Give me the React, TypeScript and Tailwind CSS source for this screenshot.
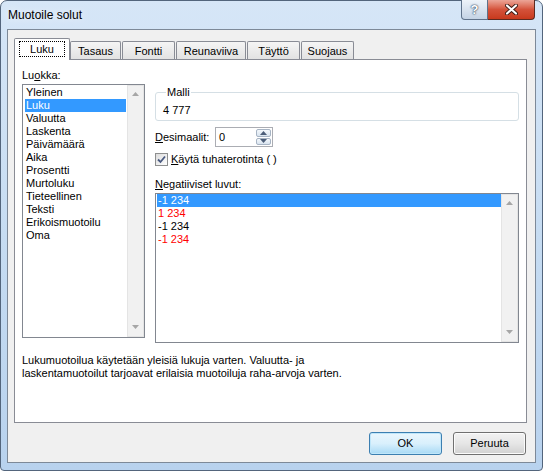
import React from "react";

const categories = [
  "Yleinen",
  "Luku",
  "Valuutta",
  "Laskenta",
  "Päivämäärä",
  "Aika",
  "Prosentti",
  "Murtoluku",
  "Tieteellinen",
  "Teksti",
  "Erikoismuotoilu",
  "Oma",
];

const negatives = [
  { text: "-1 234", selected: true, red: false },
  { text: "1 234", selected: false, red: true },
  { text: "-1 234", selected: false, red: false },
  { text: "-1 234", selected: false, red: true },
];

const tabs = [
  { label: "Tasaus", cls: "w-[51px]" },
  { label: "Fontti", cls: "ml-px w-[53px]" },
  { label: "Reunaviiva", cls: "ml-px w-[70px]" },
  { label: "Täyttö", cls: "ml-px w-[53px]" },
  { label: "Suojaus", cls: "ml-px w-[53px]" },
];

function ScrollBar() {
  return (
    <div className="flex w-[17px] flex-none flex-col items-center justify-between border border-[#e4e4e4] bg-[#f1f1f1] pt-[6px] pb-[7px]">
      <svg width="7" height="4" viewBox="0 0 7 4">
        <path d="M0 4 L3.5 0 L7 4 Z" fill="#a6a6a6" />
      </svg>
      <svg width="7" height="4" viewBox="0 0 7 4">
        <path d="M0 0 L3.5 4 L7 0 Z" fill="#a6a6a6" />
      </svg>
    </div>
  );
}

function Spinner() {
  return (
    <div className="flex h-[20px] w-[58px] items-stretch border border-[#abadb3] bg-white">
      <span className="flex-1 pl-[3px] leading-[18px]">0</span>
      <div className="flex w-[16px] flex-col gap-px py-px pr-px">
        <div className="flex flex-1 items-center justify-center rounded-[2px] border border-[#a7b4c4] bg-gradient-to-b from-[#f4f8fc] to-[#d9e4ef]">
          <svg width="7" height="4" viewBox="0 0 7 4">
            <path d="M0 4 L3.5 0 L7 4 Z" fill="#4b5d78" />
          </svg>
        </div>
        <div className="flex flex-1 items-center justify-center rounded-[2px] border border-[#a7b4c4] bg-gradient-to-b from-[#f4f8fc] to-[#d9e4ef]">
          <svg width="7" height="4" viewBox="0 0 7 4">
            <path d="M0 0 L3.5 4 L7 0 Z" fill="#4b5d78" />
          </svg>
        </div>
      </div>
    </div>
  );
}

function CheckBox() {
  return (
    <span className="flex size-[13px] items-center justify-center border border-[#8e8f8f] bg-gradient-to-br from-[#dcdcdc] to-[#ffffff]">
      <svg width="9" height="9" viewBox="0 0 9 9">
        <path d="M1 4.5 L3.5 7 L8 1.5" fill="none" stroke="#4a5a80" strokeWidth="1.8" />
      </svg>
    </span>
  );
}

export default function App() {
  return (
    <div className="h-[471px] w-[543px] bg-white font-['Liberation_Sans',Arial,sans-serif] text-[11px] text-black">
      <div className="flex h-full w-full flex-col rounded-t-[7px] rounded-b-[4px] border border-[#53657c] bg-gradient-to-b from-[#d6e6f7] via-[#c6dcf2] to-[#b8d2ee] px-[6px] pb-[7px]">
        {/* caption */}
        <div className="flex h-[28px] items-start justify-between">
          <span className="pl-px pt-[6px] text-[12px] leading-[16px] [text-shadow:0_0_8px_#ffffff]">Muotoile solut</span>
          <div className="-mt-px mr-px flex">
            <div className="flex h-[20px] w-[27px] items-center justify-center rounded-bl-[4px] border border-t-0 border-[#5f728a] bg-gradient-to-b from-[#eef3f9] via-[#d9e3ef] to-[#c4d3e5] text-[13px] font-bold text-white [text-shadow:0_0_2px_#22344c,0_0_1px_#22344c]">
              ?
            </div>
            <div className="flex h-[20px] w-[47px] items-center justify-center rounded-br-[4px] border border-l-0 border-t-0 border-[#5c2a20] bg-gradient-to-b from-[#eba597] via-[#d4523a] to-[#c8391c]">
              <svg width="13" height="11" viewBox="0 0 13 11">
                <path d="M2 1.5 L11 9.5 M11 1.5 L2 9.5" stroke="#3b1a14" strokeWidth="4" strokeLinecap="round" />
                <path d="M2 1.5 L11 9.5 M11 1.5 L2 9.5" stroke="#ffffff" strokeWidth="2.2" strokeLinecap="round" />
              </svg>
            </div>
          </div>
        </div>

        {/* client */}
        <div className="flex flex-1 flex-col border border-[#7d8998] bg-[#f0f0f0]">
          {/* tabs */}
          <div className="relative z-10 flex items-end pl-[6px] pt-[8px]">
            <div className="-mb-px flex h-[22px] w-[56px] flex-col rounded-t-[2px] border border-b-0 border-[#898c95] bg-white px-[4px] pt-[2px]">
              <span className="flex h-[16px] items-center justify-center border border-dotted border-black leading-[14px]">Luku</span>
            </div>
            {tabs.map((t) => (
              <div
                key={t.label}
                className={`flex h-[18px] items-center justify-center rounded-t-[2px] border border-b-0 border-[#898c95] bg-gradient-to-b from-[#f5f5f5] to-[#e2e2e2] pt-px ${t.cls}`}
              >
                {t.label}
              </div>
            ))}
          </div>

          {/* panel */}
          <div className="ml-[6px] mr-[8px] flex h-[364px] flex-col border border-[#898c95] bg-white pl-[7px] pr-[7px] pt-[8px]">
            <div className="flex gap-[10px]">
              {/* left column */}
              <div className="flex flex-col">
                <span className="leading-[15px]">
                  Lu<span className="underline">o</span>kka:
                </span>
                <div className="mt-px flex h-[254px] w-[123px] border border-[#828790] bg-white">
                  <div className="flex flex-1 flex-col pl-[2px] pt-px">
                    {categories.map((c) => (
                      <div
                        key={c}
                        className={`h-[13px] w-[101px] pl-px leading-[13px] ${c === "Luku" ? "bg-[#3399ff] text-white" : ""}`}
                      >
                        {c}
                      </div>
                    ))}
                  </div>
                  <ScrollBar />
                </div>
              </div>

              {/* right column */}
              <div className="flex flex-1 flex-col">
                <fieldset className="mt-[17px] h-[36px] rounded-[3px] border border-[#d5dfe5] pl-[7px]">
                  <legend className="ml-[3px] px-px leading-[14px]">Malli</legend>
                  <div className="pt-[4px] leading-[14px]">4 777</div>
                </fieldset>

                <div className="mt-[6px] flex items-center gap-[8px]">
                  <span className="w-[52px]">
                    <span className="underline">D</span>esimaalit:
                  </span>
                  <Spinner />
                </div>

                <div className="mt-[6px] flex items-center gap-[3px]">
                  <CheckBox />
                  <span className="leading-[13px]">
                    <span className="underline">K</span>äytä tuhaterotinta ( )
                  </span>
                </div>

                <span className="mt-[11px] leading-[14px]">
                  <span className="underline">N</span>egatiiviset luvut:
                </span>

                <div className="mt-[2px] flex h-[150px] border border-[#828790] bg-white">
                  <div className="flex flex-1 flex-col pl-px">
                    {negatives.map((n, i) => (
                      <div
                        key={i}
                        className={`h-[13px] pl-px leading-[13px] ${
                          n.selected ? "bg-[#3399ff] text-white" : n.red ? "text-[#ff0000]" : ""
                        }`}
                      >
                        {n.text}
                      </div>
                    ))}
                  </div>
                  <ScrollBar />
                </div>
              </div>
            </div>

            <p className="mt-[11px] leading-[13px]">
              Lukumuotoilua käytetään yleisiä lukuja varten. Valuutta- ja
              <br />
              laskentamuotoilut tarjoavat erilaisia muotoiluja raha-arvoja varten.
            </p>
          </div>

          {/* buttons */}
          <div className="mr-[9px] mt-[9px] flex justify-end gap-[11px]">
            <button className="h-[23px] w-[73px] rounded-[3px] border border-[#3c7fb1] bg-gradient-to-b from-[#eaf6fd] via-[#d9f0fc] to-[#a7d9f5] shadow-[inset_0_0_0_1px_#bfe6fa]">
              OK
            </button>
            <button className="h-[23px] w-[73px] rounded-[3px] border border-[#707070] bg-gradient-to-b from-[#f2f2f2] via-[#e6e6e6] to-[#d1d1d1] shadow-[inset_0_0_0_1px_#fbfbfb]">
              Peruuta
            </button>
          </div>
        </div>
      </div>
    </div>
  );
}
